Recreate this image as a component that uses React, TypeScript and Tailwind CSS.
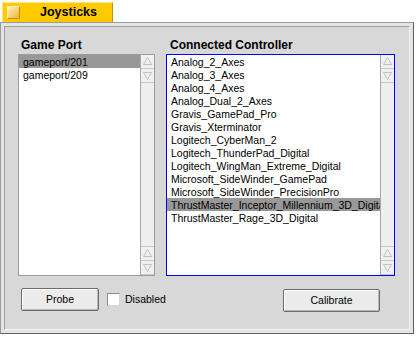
import React from "react";

const ports = ["gameport/201", "gameport/209"];

const controllers = [
  "Analog_2_Axes",
  "Analog_3_Axes",
  "Analog_4_Axes",
  "Analog_Dual_2_Axes",
  "Gravis_GamePad_Pro",
  "Gravis_Xterminator",
  "Logitech_CyberMan_2",
  "Logitech_ThunderPad_Digital",
  "Logitech_WingMan_Extreme_Digital",
  "Microsoft_SideWinder_GamePad",
  "Microsoft_SideWinder_PrecisionPro",
  "ThrustMaster_Inceptor_Millennium_3D_Digital",
  "ThrustMaster_Rage_3D_Digital",
];

function Arrow({ down }: { down?: boolean }) {
  return (
    <div className="flex h-[14px] items-center justify-center border-b border-[#c8c8c8] bg-[#f0f0f0]">
      <svg width="9" height="9" viewBox="0 0 9 9">
        {down ? (
          <path d="M0.5 1.5 H8.5 L4.5 8.5 Z" fill="none" stroke="#c0c0c0" />
        ) : (
          <path d="M4.5 0.5 L8.5 7.5 H0.5 Z" fill="none" stroke="#c0c0c0" />
        )}
      </svg>
    </div>
  );
}

function Scrollbar() {
  return (
    <div className="flex w-[14px] shrink-0 flex-col border-l border-[#a8a8a8] bg-[#eeeeee]">
      <Arrow />
      <Arrow down />
      <div className="flex-1 border-b border-[#c8c8c8]" />
      <Arrow />
      <Arrow down />
    </div>
  );
}

function ListBox({
  items,
  selected,
  focused,
  width,
}: {
  items: string[];
  selected: number;
  focused?: boolean;
  width: string;
}) {
  return (
    <div
      className={`flex h-[222px] ${width} border bg-white ${
        focused ? "border-[#0000ff]" : "border-[#9c9c9c]"
      }`}
    >
      <div className="min-w-0 flex-1 overflow-hidden">
        {items.map((item, i) => (
          <div
            key={item}
            className={`h-[13px] whitespace-nowrap pl-[4px] text-[10.5px] leading-[14px] text-black ${
              i === selected ? "bg-[#989898]" : ""
            }`}
          >
            {item}
          </div>
        ))}
      </div>
      <Scrollbar />
    </div>
  );
}

function Button({ label, width }: { label: string; width: string }) {
  return (
    <button
      className={`h-[23px] ${width} rounded-[2px] border border-[#6c6c6c] bg-[#ebebeb] text-[10.5px] text-black shadow-[inset_1px_1px_0_#ffffff,inset_-1px_-1px_0_#b8b8b8]`}
    >
      {label}
    </button>
  );
}

export default function App() {
  return (
    <div className="h-[340px] w-[419px] bg-white font-['Liberation_Sans',Arial,sans-serif]">
      {/* title tab */}
      <div className="ml-[2px] mt-[2px] flex h-[20px] w-[111px] items-center border-l border-r border-t border-l-[#ffe680] border-r-[#c89000] border-t-[#ffe680] bg-[#ffcb00]">
        <div className="ml-[4px] h-[13px] w-[13px] border border-[#fff2b0] border-b-[#c09000] border-r-[#c09000] bg-linear-to-br from-[#fff4c0] to-[#f0b000]" />
        <span className="ml-[20px] text-[12.5px] font-bold leading-none text-black">
          Joysticks
        </span>
      </div>

      {/* window frame */}
      <div className="h-[312px] w-[414px] border border-[#9a9a9a] border-b-[#606060] border-r-[#606060] bg-[#e4e4e4] p-[3px]">
        <div className="flex h-full flex-col border border-[#f4f4f4] border-l-[#a0a0a0] border-t-[#a0a0a0] bg-[#d8d8d8] pl-[13px] pt-[12px]">
          <div className="flex gap-[11px]">
            <div className="flex flex-col">
              <div className="h-[15px] pl-[3px] text-[12px] font-bold leading-[12px] text-black">
                Game Port
              </div>
              <ListBox items={ports} selected={0} width="w-[137px]" />
            </div>
            <div className="flex flex-col">
              <div className="h-[15px] pl-[4px] text-[12px] font-bold leading-[12px] text-black">
                Connected Controller
              </div>
              <ListBox
                items={controllers}
                selected={11}
                focused
                width="w-[229px]"
              />
            </div>
          </div>

          <div className="mt-[11px] flex items-center pl-[3px] pr-[29px]">
            <Button label="Probe" width="w-[78px]" />
            <div className="ml-[8px] h-[13px] w-[13px] border border-[#8c8c8c] border-b-[#d8d8d8] border-r-[#d8d8d8] bg-white" />
            <span className="ml-[5px] text-[10.5px] text-black">Disabled</span>
            <div className="ml-auto">
              <Button label="Calibrate" width="w-[97px]" />
            </div>
          </div>
        </div>
      </div>
    </div>
  );
}
